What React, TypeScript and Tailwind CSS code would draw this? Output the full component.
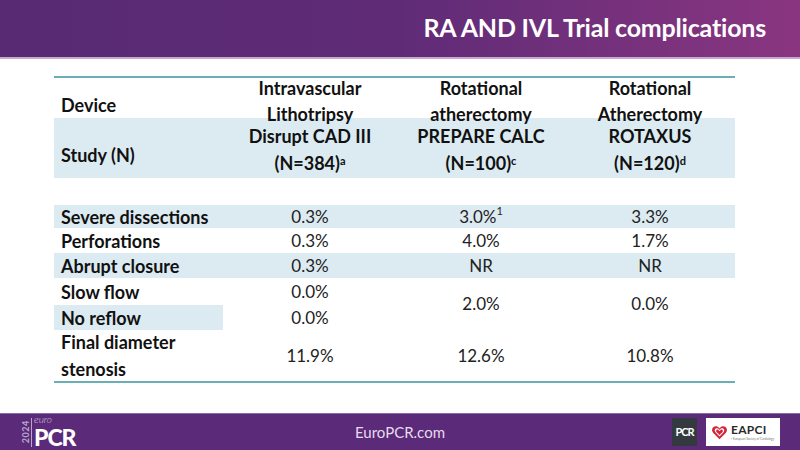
import React from 'react';

const font = { fontFamily: 'Lato, "Open Sans", sans-serif' };

const label = 'flex items-center pl-[7px] font-bold text-[18px] text-[#111]';
const head = 'flex items-center justify-center text-center font-bold text-[18px] text-[#111]';
const cell = 'flex items-center justify-center text-[17px] text-[#222]';
const band = 'bg-[#dcebf1]';

const Heart = () => (
  <svg width="17" height="17" viewBox="0 0 24 24">
    <path d="M12 21.5 3.2 12.6C.6 10 .9 5.8 4 3.9c2.4-1.5 5.6-.9 7.3 1.4L12 6.2l.7-.9c1.7-2.3 4.9-2.9 7.3-1.4 3.1 1.9 3.4 6.1.8 8.7Z" fill="#d4243a" />
    <path d="M12 17.5 6.3 11.7c-1.5-1.6-1.3-4 .4-5.2 1.5-1 3.5-.6 4.5.9L12 8.6l.8-1.2c1-1.5 3-1.9 4.5-.9 1.7 1.2 1.9 3.6.4 5.2Z" fill="#fff" />
    <path d="M12 15.6 7.8 11.3c-.9-1-.8-2.4.3-3.1.9-.6 2.1-.4 2.7.5l1.2 1.6 1.2-1.6c.6-.9 1.8-1.1 2.7-.5 1.1.7 1.2 2.1.3 3.1Z" fill="#d4243a" />
  </svg>
);

export default function App() {
  return (
    <div className="w-[800px] h-[450px] bg-white flex flex-col overflow-hidden" style={font}>
      {/* Title bar */}
      <header className="h-[59px] shrink-0 flex items-center justify-end pr-[34px] bg-gradient-to-r from-[#582a74] via-[#5f2b77] to-[#8a3580] border-b-2 border-[#c7a9cf]">
        <h1 className="text-white font-bold text-[25px] tracking-[-0.2px] leading-none pb-[3px]">
          RA AND IVL Trial complications
        </h1>
      </header>

      {/* Table */}
      <main className="flex-1 pt-[17px] pl-[54px]">
        <div className="w-[681px] border-t-2 border-b-2 border-[#6aaeb6] grid grid-cols-[169px_174px_168px_170px] grid-rows-[40px_60px_27px_23px_25px_25px_27px_25px_51px] leading-[26px]">
          {/* Device row */}
          <div className={`${label} relative z-10 pt-[13px]`}>Device</div>
          <div className={`${head} relative z-10 pt-[6px]`}>Intravascular<br />Lithotripsy</div>
          <div className={`${head} relative z-10 pt-[6px]`}>Rotational<br />atherectomy</div>
          <div className={`${head} relative z-10 pt-[6px]`}>Rotational<br />Atherectomy</div>

          {/* Study row */}
          <div className={`${label} ${band} pt-[14px]`}>Study (N)</div>
          <div className={`${band} ${head} leading-[27px] pt-[4px]`}>
            <div>Disrupt CAD III<br />(N=384)<sup className="text-[11px] font-bold">a</sup></div>
          </div>
          <div className={`${band} ${head} leading-[27px] pt-[4px]`}>
            <div>PREPARE CALC<br />(N=100)<sup className="text-[11px] font-bold">c</sup></div>
          </div>
          <div className={`${band} ${head} leading-[27px] pt-[4px]`}>
            <div>ROTAXUS<br />(N=120)<sup className="text-[11px] font-bold">d</sup></div>
          </div>

          {/* Spacer row */}
          <div className="col-span-4" />

          {/* Severe dissections */}
          <div className={`${label} ${band}`}>Severe dissections</div>
          <div className={`${cell} ${band}`}>0.3%</div>
          <div className={`${cell} ${band}`}>3.0%<sup className="text-[11px]">1</sup></div>
          <div className={`${cell} ${band}`}>3.3%</div>

          {/* Perforations */}
          <div className={label}>Perforations</div>
          <div className={cell}>0.3%</div>
          <div className={cell}>4.0%</div>
          <div className={cell}>1.7%</div>

          {/* Abrupt closure */}
          <div className={`${label} ${band}`}>Abrupt closure</div>
          <div className={`${cell} ${band}`}>0.3%</div>
          <div className={`${cell} ${band}`}>NR</div>
          <div className={`${cell} ${band}`}>NR</div>

          {/* Slow flow / No reflow */}
          <div className={label}>Slow flow</div>
          <div className={cell}>0.0%</div>
          <div className={`${cell} row-span-2`}>2.0%</div>
          <div className={`${cell} row-span-2`}>0.0%</div>
          <div className={`${label} ${band}`}>No reflow</div>
          <div className={cell}>0.0%</div>

          {/* Final diameter stenosis */}
          <div className={`${label} leading-[27px]`}>Final diameter<br />stenosis</div>
          <div className={cell}>11.9%</div>
          <div className={cell}>12.6%</div>
          <div className={cell}>10.8%</div>
        </div>
      </main>

      {/* Footer */}
      <footer className="h-[37px] shrink-0 bg-[#5b2a78] border-t border-[#8d6aa6] flex items-center px-[20px] relative">
        <div className="flex items-center h-full">
          <div className="w-[10px] h-[30px] flex items-center justify-center">
            <span className="-rotate-90 text-[9px] font-bold text-[#b9a6cc] tracking-[0.5px] whitespace-nowrap">2024</span>
          </div>
          <div className="w-px h-[29px] bg-[#b9a6cc] ml-[1px] mr-[2px]" />
          <div className="flex flex-col h-full justify-center">
            <span className="italic text-[10px] text-[#d8cde3] font-light leading-[11px]">euro</span>
            <span className="text-white font-black text-[23px] tracking-[-1px] leading-[25px]">PCR</span>
          </div>
        </div>

        <div className="absolute left-0 right-0 top-0 bottom-0 flex items-center justify-center pointer-events-none">
          <span className="text-[15px] text-[#e6dcee]">EuroPCR.com</span>
        </div>

        <div className="ml-auto flex items-center gap-[9px]">
          <div className="w-[25px] h-[28px] bg-[#34393f] flex items-center justify-center">
            <span className="text-white font-bold text-[11px] tracking-[-1px]">PCR</span>
          </div>
          <div className="w-[74px] h-[28px] bg-white flex items-center pl-[5px] gap-[3px]">
            <Heart />
            <div className="flex flex-col leading-none">
              <span className="text-[12px] font-bold text-[#2b2b2b] tracking-[0.3px]">EAPCI</span>
              <span className="text-[3px] text-[#777] mt-[2px] whitespace-nowrap">▪ European Society of Cardiology</span>
            </div>
          </div>
        </div>
      </footer>
    </div>
  );
}
